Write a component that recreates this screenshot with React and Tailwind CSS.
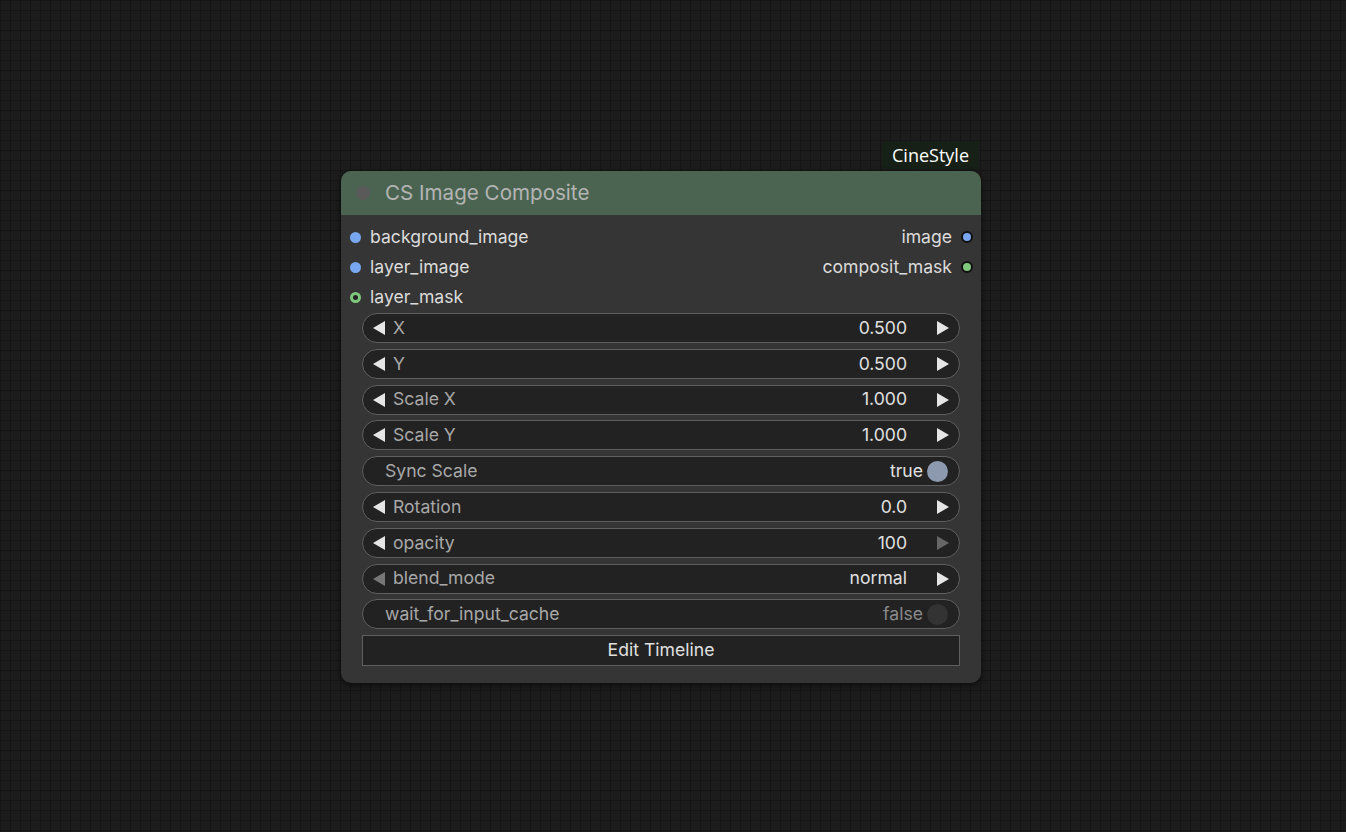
export default function App() {
  const L = "text-[#dcdcdc]";
  const Arrow = ({ dir, dim }) => (
    <svg width="14" height="14" viewBox="0 0 14 14" className="shrink-0">
      {dir === "l" ? (
        <polygon points="13,0 13,14 1,7" fill={dim ? "#777" : "#e6e6e6"} />
      ) : (
        <polygon points="1,0 1,14 13,7" fill={dim ? "#666" : "#e6e6e6"} />
      )}
    </svg>
  );
  const Num = ({ label, value, ldim, rdim }) => (
    <div className="h-[30px] rounded-full border border-[#5f5f5f] bg-[#222222] flex items-center pl-[9px] pr-[9px]">
      <Arrow dir="l" dim={ldim} />
      <span className="ml-[7px] text-[#a8a8a8]">{label}</span>
      <span className="ml-auto mr-[29px] text-[#e0e0e0]">{value}</span>
      <Arrow dir="r" dim={rdim} />
    </div>
  );
  const Toggle = ({ label, value, on }) => (
    <div className="h-[30px] rounded-full border border-[#5f5f5f] bg-[#222222] flex items-center pl-[22px] pr-[11px]">
      <span className="text-[#a8a8a8]">{label}</span>
      <span className={"ml-auto mr-[4px] " + (on ? "text-[#e0e0e0]" : "text-[#8a8a8a]")}>{value}</span>
      <span className={"w-[21px] h-[21px] rounded-full " + (on ? "bg-[#8d99ae]" : "bg-[#333333]")} />
    </div>
  );
  return (
    <div
      className="relative w-[1346px] h-[832px] overflow-hidden bg-[#1c1c1c] bg-[linear-gradient(#151515_1px,transparent_1px),linear-gradient(90deg,#151515_1px,transparent_1px)] bg-[size:10px_10px]"
      style={{ fontFamily: "Inter, 'Noto Sans', sans-serif" }}
    >
      <div className="absolute left-[882px] top-[141px] w-[97px] h-[28px] bg-[#162016] text-white text-[18px] font-medium flex items-center justify-center" style={{ fontFamily: "'Open Sans', sans-serif" }}>
        CineStyle
      </div>
      <div className="absolute left-[341px] top-[171px] w-[640px] h-[512px] rounded-[10px] bg-[#353535] shadow-[0_2px_6px_rgba(0,0,0,0.6)] overflow-hidden">
        <div className="h-[44px] bg-[#4a6451] flex items-center pl-[15px]">
          <span className="w-[14px] h-[14px] rounded-full bg-[#5a5a5a]" />
          <span className="ml-[15px] text-[20.6px] text-[#b4b4b4]">CS Image Composite</span>
        </div>
        <div className="text-[17.6px]">
          <div className="flex flex-col mt-[7px]">
            <div className="h-[30px] flex items-center pl-[9px] pr-[8px]">
              <span className="w-[11px] h-[11px] rounded-full bg-[#78a7f0]" />
              <span className={"ml-[9px] " + L}>background_image</span>
              <span className={"ml-auto mr-[9px] " + L}>image</span>
              <span className="w-[12px] h-[12px] rounded-full bg-[#78a7f0] border-2 border-[#111]" />
            </div>
            <div className="h-[30px] flex items-center pl-[9px] pr-[8px]">
              <span className="w-[11px] h-[11px] rounded-full bg-[#78a7f0]" />
              <span className={"ml-[9px] " + L}>layer_image</span>
              <span className={"ml-auto mr-[9px] " + L}>composit_mask</span>
              <span className="w-[12px] h-[12px] rounded-full bg-[#7ec77c] border-2 border-[#111]" />
            </div>
            <div className="h-[30px] flex items-center pl-[9px] pr-[8px]">
              <span className="w-[11px] h-[11px] rounded-full border-[3px] border-[#7ec77c] bg-[#222]" />
              <span className={"ml-[9px] " + L}>layer_mask</span>
            </div>
          </div>
          <div className="flex flex-col gap-[5.8px] px-[21px] mt-[1px]">
            <Num label="X" value="0.500" />
            <Num label="Y" value="0.500" />
            <Num label="Scale X" value="1.000" />
            <Num label="Scale Y" value="1.000" />
            <Toggle label="Sync Scale" value="true" on />
            <Num label="Rotation" value="0.0" />
            <Num label="opacity" value="100" rdim />
            <Num label="blend_mode" value="normal" ldim />
            <Toggle label="wait_for_input_cache" value="false" />
            <div className="h-[31px] border border-[#5f5f5f] bg-[#222222] flex items-center justify-center text-[#e0e0e0]">
              Edit Timeline
            </div>
          </div>
        </div>
      </div>
    </div>
  );
}
